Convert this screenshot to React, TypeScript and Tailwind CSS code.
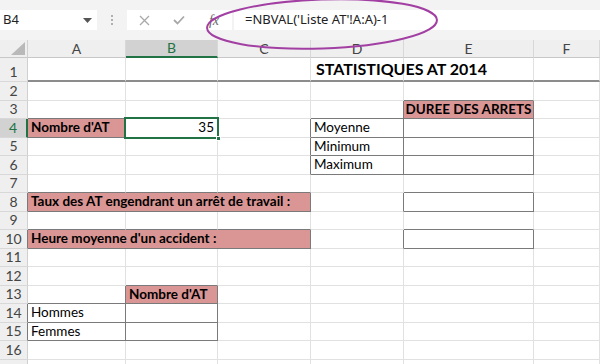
import React from "react";

type Cell = { text?: string; bold?: boolean; pink?: boolean; align?: "left" | "right" | "center"; span?: number; big?: boolean };

const COLS = ["A", "B", "C", "D", "E", "F"];
const ROWS = Array.from({ length: 17 }, (_, i) => i + 1);

const cells: Record<string, Cell> = {
  "1-3": { text: "STATISTIQUES AT 2014", bold: true, big: true },
  "3-4": { text: "DUREE DES ARRETS", bold: true, pink: true, align: "center" },
  "4-0": { text: "Nombre d'AT", bold: true, pink: true },
  "4-1": { text: "35", align: "right" },
  "4-3": { text: "Moyenne" },
  "5-3": { text: "Minimum" },
  "6-3": { text: "Maximum" },
  "8-0": { text: "Taux des AT engendrant un arrêt de travail :", bold: true, pink: true, span: 3 },
  "10-0": { text: "Heure moyenne d'un accident :", bold: true, pink: true, span: 3 },
  "13-1": { text: "Nombre d'AT", bold: true, pink: true },
  "14-0": { text: "Hommes" },
  "15-0": { text: "Femmes" },
};

const boxedList = [
  "3-4", "4-0", "4-1", "4-3", "4-4", "5-3", "5-4", "6-3", "6-4",
  "8-0", "8-1", "8-2", "8-4", "10-0", "10-1", "10-2", "10-4",
  "13-1", "14-0", "14-1", "15-0", "15-1",
];
const boxed = new Set(boxedList);
const isBoxed = (r: number, c: number) => boxed.has(`${r}-${c}`);

const covered = new Set<string>(["8-1", "8-2", "10-1", "10-2"]);

function RowHeader({ r }: { r: number }) {
  const sel = r === 4;
  const h = r === 1 ? "h-[24px]" : "h-[18.5px]";
  const bg = sel ? "bg-[#d2d2d2] text-[#217346]" : "bg-[#efefef] text-[#444444]";
  const right = sel ? "border-r-2 border-r-[#217346]" : isBoxed(r, 0) ? "border-r border-r-[#7a7a7a]" : "border-r border-r-[#d0d0d0]";
  return (
    <div className={`${h} ${bg} ${right} border-b border-b-[#d8d8d8] flex items-end justify-center text-[14px] leading-none pb-[2px]`}>
      {r < 17 ? r : ""}
    </div>
  );
}

function GridCell({ r, c }: { r: number; c: number }) {
  const cell = cells[`${r}-${c}`] || {};
  const span = cell.span || 1;
  const last = c + span - 1;
  const h = r === 1 ? "h-[24px]" : "h-[18.5px]";
  const rightDark = isBoxed(r, last) || isBoxed(r, last + 1);
  const bottomDark = isBoxed(r, c) || isBoxed(r + 1, c);
  const right = rightDark ? "border-r-[#7a7a7a]" : "border-r-[#e1e1e1]";
  const bottom = r === 1 ? "border-b-2 border-b-[#8c8c8c]" : bottomDark ? "border-b border-b-[#7a7a7a]" : "border-b border-b-[#e1e1e1]";
  const bg = cell.pink ? "bg-[#da9694]" : "";
  const align = cell.align === "right" ? "justify-end" : cell.align === "center" ? "justify-center" : "justify-start";
  const spanCls = span === 3 ? "col-span-3" : "";
  const weight = cell.bold ? "font-bold" : "font-normal";
  const size = cell.big ? "text-[16px] pl-[5px] pb-[3px]" : "text-[13.5px] px-[3px] pb-[2px]";
  const sel = r === 4 && c === 1;
  return (
    <div className={`${h} ${spanCls} ${bg} border-r ${right} ${bottom} relative flex items-end ${align} ${size} ${weight} leading-none whitespace-nowrap text-black`}>
      {cell.text && <span className="relative z-10">{cell.text}</span>}
      {sel && (
        <div className="absolute left-[-2px] top-[-2px] right-[-2px] bottom-[-2px] border-2 border-[#217346] z-20 pointer-events-none">
          <div className="absolute right-[-4px] bottom-[-4px] w-[5px] h-[5px] bg-[#217346] border border-white" />
        </div>
      )}
    </div>
  );
}

export default function App() {
  return (
    <div className="w-[600px] h-[364px] overflow-hidden bg-white relative" style={{ fontFamily: "Lato, 'Open Sans', sans-serif" }}>
      {/* Formula bar */}
      <div className="h-[40px] bg-[#f3f3f3] flex items-center" style={{ fontFamily: "'Noto Sans', 'Open Sans', sans-serif" }}>
        <div className="w-[97px] h-[20px] bg-white flex items-center justify-between pl-[3px] pr-[5px]">
          <span className="text-[13px] text-[#222]">B4</span>
          <svg width="9" height="5" viewBox="0 0 9 5"><path d="M0 0 L9 0 L4.5 5 Z" fill="#555" /></svg>
        </div>
        <div className="w-[30px] flex flex-col items-center justify-center gap-[2px]">
          <div className="w-[2px] h-[2px] bg-[#b0b0b0]" />
          <div className="w-[2px] h-[2px] bg-[#b0b0b0]" />
          <div className="w-[2px] h-[2px] bg-[#b0b0b0]" />
        </div>
        <div className="w-[105px] h-[20px] bg-white flex items-center">
          <div className="w-[34px] flex justify-center">
            <svg width="11" height="11" viewBox="0 0 11 11"><path d="M1 1 L10 10 M10 1 L1 10" stroke="#a8a8a8" strokeWidth="1.3" /></svg>
          </div>
          <div className="w-[35px] flex justify-center">
            <svg width="12" height="10" viewBox="0 0 12 10"><path d="M1 5 L4.5 8.5 L11 1.5" stroke="#a8a8a8" strokeWidth="1.8" fill="none" /></svg>
          </div>
          <div className="w-[36px] flex justify-center">
            <span className="text-[14px] italic text-[#6a6a6a]" style={{ fontFamily: "'Liberation Serif', serif" }}>fx</span>
          </div>
        </div>
        <div className="ml-[2px] flex-1 h-[20px] bg-white flex items-center pl-[11px]">
          <span className="text-[13px] text-[#222]">=NBVAL('Liste AT'!A:A)-1</span>
        </div>
      </div>

      {/* Grid */}
      <div className="grid grid-cols-[28px_98px_92px_93px_93px_130px_1fr]">
        <div className="h-[18px] bg-[#efefef] border-r border-r-[#d0d0d0] border-b border-b-[#c8c8c8] relative flex items-end justify-end pr-[2px] pb-[2px]">
          <svg width="14" height="13" viewBox="0 0 14 13"><path d="M14 0 L14 13 L0 13 Z" fill="#b9b9b9" /></svg>
        </div>
        {COLS.map((col, i) => (
          <div
            key={col}
            className={`h-[18px] flex items-center justify-center text-[14px] leading-none ${i === 1 ? "bg-[#d2d2d2] text-[#217346] border-b-2 border-b-[#217346]" : "bg-[#efefef] text-[#444444] border-b border-b-[#c8c8c8]"} border-r border-r-[#d8d8d8]`}
          >
            {col}
          </div>
        ))}
        {ROWS.map((r) => (
          <React.Fragment key={r}>
            <RowHeader r={r} />
            {COLS.map((_, c) => (covered.has(`${r}-${c}`) ? null : <GridCell key={c} r={r} c={c} />))}
          </React.Fragment>
        ))}
      </div>

      {/* Purple annotation ellipse */}
      <svg className="absolute left-0 top-0 pointer-events-none" width="600" height="60" viewBox="0 0 600 60">
        <ellipse cx="322" cy="24" rx="115" ry="24.5" transform="rotate(-2 322 24)" fill="none" stroke="#a23fa3" strokeWidth="2" />
      </svg>
    </div>
  );
}
